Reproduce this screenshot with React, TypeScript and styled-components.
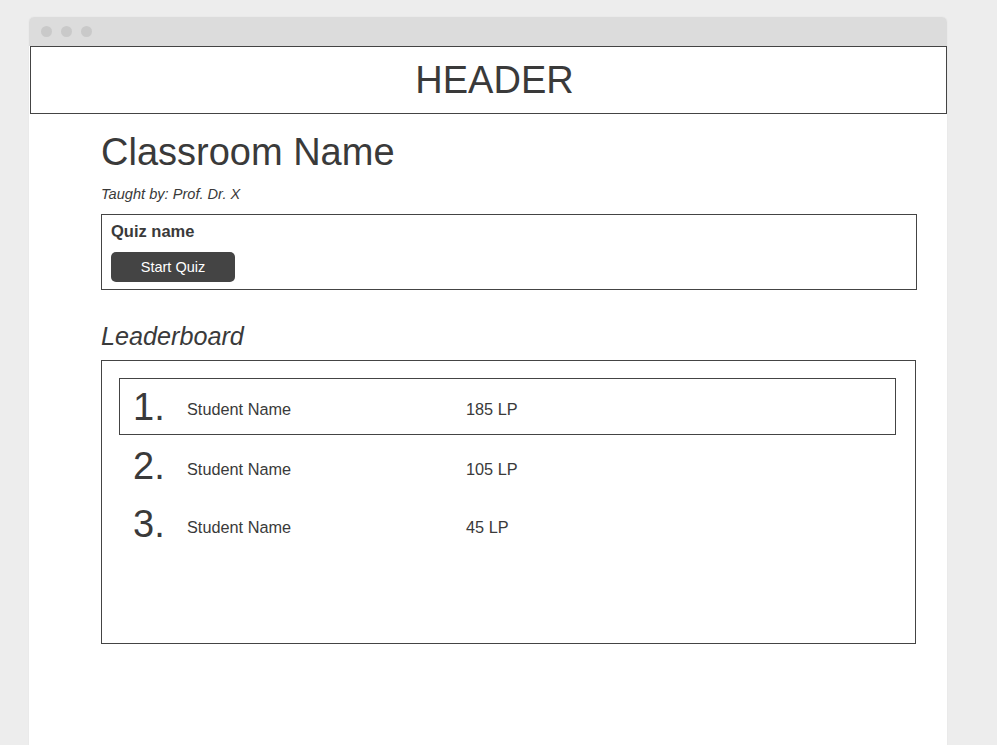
import React from 'react';
import styled, { createGlobalStyle } from 'styled-components';

const GlobalStyle = createGlobalStyle`
  body {
    margin: 0;
    background-color: #ededed;
    font-family: "Liberation Sans", Arial, sans-serif;
    color: #3a3a3a;
  }
`;

const Page = styled.div`
  padding: 17px 0 0 29px;
  height: 728px;
  overflow: hidden;
`;

const Window = styled.div`
  width: 918px;
  height: 728px;
  background-color: #fff;
  border-radius: 5px 5px 0 0;
  box-shadow: 0 0 1px rgba(0, 0, 0, 0.15);
  display: flex;
  flex-direction: column;
`;

const TitleBar = styled.div`
  height: 29px;
  background-color: #dcdcdc;
  border-radius: 5px 5px 0 0;
  display: flex;
  align-items: center;
  gap: 9px;
  padding-left: 12px;
`;

const Dot = styled.span`
  width: 11px;
  height: 11px;
  border-radius: 50%;
  background-color: #c9c9c9;
`;

const Header = styled.header`
  margin-left: 1px;
  height: 66px;
  border: 1px solid #444;
  display: flex;
  align-items: center;
  justify-content: center;
  padding-left: 12px;
  font-size: 38px;
  color: #3a3a3a;
`;

const Content = styled.main`
  padding: 17px 0 0 72px;
  display: flex;
  flex-direction: column;
`;

const Title = styled.h1`
  margin: 0;
  font-size: 38px;
  font-weight: normal;
  line-height: 42px;
`;

const Subtitle = styled.p`
  margin: 13px 0 0;
  font-size: 14.6px;
  font-style: italic;
  line-height: 17px;
`;

const QuizCard = styled.section`
  margin-top: 11px;
  width: 816px;
  height: 76px;
  border: 1px solid #444;
  padding: 6px 9px 0;
  box-sizing: border-box;
`;

const QuizName = styled.h2`
  margin: 0;
  font-size: 16.5px;
  font-weight: bold;
  line-height: 20px;
`;

const StartButton = styled.button`
  margin-top: 11px;
  width: 124px;
  height: 30px;
  border: none;
  border-radius: 5px;
  background-color: #444;
  color: #fff;
  font-family: "Liberation Sans", Arial, sans-serif;
  font-size: 14.5px;
  cursor: pointer;
`;

const SectionTitle = styled.h2`
  margin: 32px 0 0;
  font-size: 25.2px;
  font-style: italic;
  font-weight: normal;
  line-height: 28px;
`;

const Board = styled.section`
  margin-top: 10px;
  width: 815px;
  height: 284px;
  border: 1px solid #444;
  box-sizing: border-box;
  padding: 17px 19px 0 17px;
  display: flex;
  flex-direction: column;
`;

const Row = styled.div<{ $highlight?: boolean }>`
  height: ${(p) => (p.$highlight ? '57px' : '58px')};
  box-sizing: border-box;
  border: 1px solid ${(p) => (p.$highlight ? '#444' : 'transparent')};
  display: flex;
  align-items: center;
  padding-left: 13px;

  &:nth-child(2) {
    margin-top: 2px;
  }
`;

const Rank = styled.span`
  width: 54px;
  font-size: 38px;
  line-height: 40px;
`;

const Name = styled.span`
  width: 279px;
  margin-top: 6px;
  font-size: 16.3px;
`;

const Points = styled.span`
  margin-top: 6px;
  font-size: 16.3px;
`;

const students = [
  { rank: 1, name: 'Student Name', points: 185 },
  { rank: 2, name: 'Student Name', points: 105 },
  { rank: 3, name: 'Student Name', points: 45 },
];

const App: React.FC = () => {
  return (
    <>
      <GlobalStyle />
      <Page>
        <Window>
          <TitleBar>
            <Dot />
            <Dot />
            <Dot />
          </TitleBar>
          <Header>HEADER</Header>
          <Content>
            <Title>Classroom Name</Title>
            <Subtitle>Taught by: Prof. Dr. X</Subtitle>
            <QuizCard>
              <QuizName>Quiz name</QuizName>
              <StartButton>Start Quiz</StartButton>
            </QuizCard>
            <SectionTitle>Leaderboard</SectionTitle>
            <Board>
              {students.map((s) => (
                <Row key={s.rank} $highlight={s.rank === 1}>
                  <Rank>{s.rank}.</Rank>
                  <Name>{s.name}</Name>
                  <Points>{s.points} LP</Points>
                </Row>
              ))}
            </Board>
          </Content>
        </Window>
      </Page>
    </>
  );
};

export default App;
